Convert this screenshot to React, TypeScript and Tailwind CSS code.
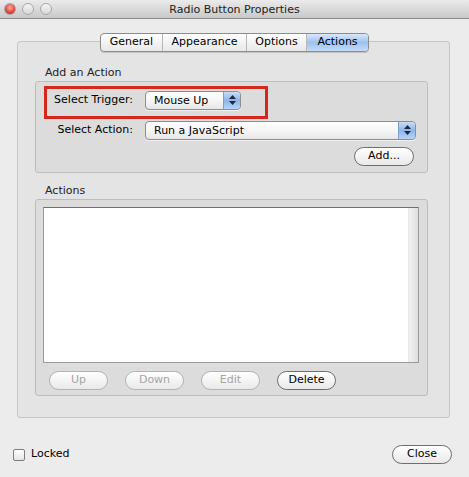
import React from "react";

const font = { fontFamily: '"Lucida Grande", "DejaVu Sans", sans-serif' };

function Light({ color }: { color: string }) {
  return (
    <div
      className="w-[12px] h-[12px] rounded-full border border-[#a8a8a8]"
      style={{ background: color }}
    />
  );
}

function Stepper() {
  return (
    <div className="w-[17px] h-full flex flex-col items-center justify-center gap-[2px] rounded-r-[4px] bg-gradient-to-b from-[#c9dcf5] via-[#8db5ea] to-[#b9d3f4] border-l border-[#7f9fca]">
      <svg width="7" height="4" viewBox="0 0 7 4"><path d="M0 4 L3.5 0 L7 4 Z" fill="#1e2a3a" /></svg>
      <svg width="7" height="4" viewBox="0 0 7 4"><path d="M0 0 L3.5 4 L7 0 Z" fill="#1e2a3a" /></svg>
    </div>
  );
}

function Popup({ label, w }: { label: string; w: string }) {
  return (
    <div className={`${w} h-[19px] flex items-stretch rounded-[4px] border border-[#8e8e8e] bg-gradient-to-b from-white via-[#f6f6f6] to-[#e6e6e6] shadow-[0_1px_0_rgba(255,255,255,0.6)]`}>
      <span className="flex-1 pl-[8px] text-[11px] leading-[17px] text-black">{label}</span>
      <Stepper />
    </div>
  );
}

function Pill({ label, disabled, w = "w-[59px]" }: { label: string; disabled?: boolean; w?: string }) {
  return (
    <div
      className={`${w} h-[19px] rounded-full border flex items-center justify-center text-[11px] bg-gradient-to-b from-white to-[#e9e9e9] ${
        disabled ? "border-[#b3b3b3] text-[#a5a5a5] from-[#ececec] to-[#e2e2e2]" : "border-[#6e6e6e] text-black"
      }`}
    >
      {label}
    </div>
  );
}

const tabs = ["General", "Appearance", "Options", "Actions"];
const tabW = ["w-[61px]", "w-[84px]", "w-[60px]", "w-[62px]"];

export default function App() {
  return (
    <div className="w-[469px] h-[477px] bg-[#ececec] flex flex-col overflow-hidden" style={font}>
      <div className="h-[19px] flex items-center relative bg-gradient-to-b from-[#ebebeb] to-[#c9c9c9] border-b border-[#8a8a8a]">
        <div className="flex gap-[6px] pl-[4px]">
          <Light color="radial-gradient(circle at 50% 35%, #ffb0a8, #e0443a 60%, #a8221b)" />
          <Light color="linear-gradient(#f6f6f6, #d6d6d6)" />
          <Light color="linear-gradient(#f6f6f6, #d6d6d6)" />
        </div>
        <span className="absolute left-0 right-0 top-[2px] text-center text-[11px] text-[#222] pointer-events-none">
          Radio Button Properties
        </span>
      </div>

      <div className="relative mt-[22px] ml-[17px] w-[433px] h-[377px] border border-[#c6c6c6] rounded-[3px] bg-[#e4e4e4] pt-[24px] pl-[17px]">
        <div className="absolute -top-[9px] left-[82px] flex h-[19px] rounded-[4px] border border-[#8c8c8c] overflow-hidden bg-gradient-to-b from-white to-[#e8e8e8] shadow-[0_1px_1px_rgba(0,0,0,0.15)]">
          {tabs.map((t, i) => (
            <div
              key={t}
              className={`${tabW[i]} flex items-center justify-center text-[11px] text-black ${
                i > 0 ? "border-l border-[#b8b8b8]" : ""
              } ${i === 3 ? "bg-gradient-to-b from-[#d9e8fa] via-[#9cc3f0] to-[#c4dcf8]" : ""}`}
            >
              {t}
            </div>
          ))}
        </div>

        <div className="h-[15px] pl-[10px] text-[11px] leading-[14px] text-[#222]">Add an Action</div>
        <div className="relative w-[393px] h-[92px] rounded-[3px] border border-[#bdbdbd] bg-[#dcdcdc] pt-[8px]">
          <div className="absolute left-[8px] top-[4px] w-[224px] h-[33px] border-[3px] border-[#d4281c]" />
          <div className="flex items-center h-[20px]">
            <span className="w-[97px] text-right text-[11px] text-black">Select Trigger:</span>
            <div className="ml-[12px]"><Popup label="Mouse Up" w="w-[96px]" /></div>
          </div>
          <div className="flex items-center h-[20px] mt-[10px]">
            <span className="w-[97px] text-right text-[11px] text-black">Select Action:</span>
            <div className="ml-[12px]"><Popup label="Run a JavaScript" w="w-[271px]" /></div>
          </div>
          <div className="flex justify-end pr-[13px] mt-[7px]">
            <Pill label="Add..." w="w-[60px]" />
          </div>
        </div>

        <div className="h-[15px] mt-[11px] pl-[10px] text-[11px] leading-[14px] text-[#222]">Actions</div>
        <div className="w-[393px] h-[197px] rounded-[3px] border border-[#bdbdbd] bg-[#dcdcdc] pt-[7px] pl-[7px]">
          <div className="w-[376px] h-[156px] border border-[#9a9a9a] border-t-[#6f6f6f] bg-white flex justify-end">
            <div className="w-[10px] h-full bg-gradient-to-r from-[#f2f2f2] to-[#dedede] border-l border-[#e6e6e6]" />
          </div>
          <div className="flex gap-[17px] pl-[6px] mt-[8px]">
            <Pill label="Up" disabled />
            <Pill label="Down" disabled />
            <Pill label="Edit" disabled />
            <Pill label="Delete" />
          </div>
        </div>
      </div>

      <div className="flex items-center justify-between mt-[27px] pl-[13px] pr-[17px]">
        <div className="flex items-center gap-[6px]">
          <div className="w-[12px] h-[12px] rounded-[2px] border border-[#7d7d7d] bg-gradient-to-b from-white to-[#e6e6e6]" />
          <span className="text-[11px] text-black">Locked</span>
        </div>
        <Pill label="Close" w="w-[60px]" />
      </div>
    </div>
  );
}
